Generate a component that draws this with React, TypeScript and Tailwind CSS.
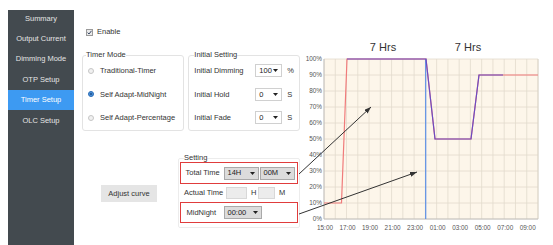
import React from "react";

function Tri() {
  return (
    <svg width="5" height="3" viewBox="0 0 5 3">
      <path d="M0 0H5L2.5 3Z" fill="#222" />
    </svg>
  );
}

function Select({ value, w, gray }: { value: string; w: string; gray?: boolean }) {
  return (
    <div
      className={`flex items-center justify-between h-[13px] ${w} pl-[3px] pr-[3px] border ${
        gray ? "border-[#a9a9a9] bg-[#dcdcdc]" : "border-[#d0d0d0] bg-white"
      } text-[7.5px] text-[#222]`}
    >
      <span>{value}</span>
      <Tri />
    </div>
  );
}

function Radio({ checked }: { checked?: boolean }) {
  if (checked)
    return (
      <div className="w-[6px] h-[6px] rounded-full bg-[#4a90d9] border border-[#2d6db5] flex items-center justify-center">
        <div className="w-[2px] h-[2px] rounded-full bg-[#1d4f8a]" />
      </div>
    );
  return <div className="w-[6px] h-[6px] rounded-full bg-[#f1f1f1] border border-[#c6c6c6]" />;
}

const menu = ["Summary", "Output Current", "Dimming Mode", "OTP Setup", "Timer Setup", "OLC Setup"];

function Chart() {
  const X0 = 24;
  const X1 = 238;
  const Y0 = 59;
  const Y1 = 219;
  const hx = (h: number) => X0 + (h * (X1 - X0)) / 19;
  const py = (p: number) => Y1 - p * 1.6;
  const hours = Array.from({ length: 20 }, (_, i) => i);
  const pcts = Array.from({ length: 11 }, (_, i) => i * 10);
  const labels = ["15:00", "17:00", "19:00", "21:00", "23:00", "01:00", "03:00", "05:00", "07:00", "09:00"];
  return (
    <svg width="253" height="245" viewBox="0 0 253 245" className="shrink-0">
      <text x="83" y="51" textAnchor="middle" fontSize="11" fill="#333" fontFamily="'Liberation Sans', Arial, sans-serif">
        7 Hrs
      </text>
      <text x="168" y="51" textAnchor="middle" fontSize="11" fill="#333" fontFamily="'Liberation Sans', Arial, sans-serif">
        7 Hrs
      </text>
      <rect x={X0} y={Y0} width={X1 - X0} height={Y1 - Y0} fill="#fdf6ea" />
      {hours.map((h) => (
        <line key={"v" + h} x1={hx(h)} x2={hx(h)} y1={Y0} y2={Y1} stroke="#e2dbcd" strokeWidth="0.8" />
      ))}
      {pcts.map((p) => (
        <line key={"h" + p} x1={X0} x2={X1} y1={py(p)} y2={py(p)} stroke="#e2dbcd" strokeWidth="0.8" />
      ))}
      <line x1={X1} x2={X1} y1={Y0} y2={Y1} stroke="#d6d0c4" strokeWidth="0.8" />
      <line x1={X0} x2={X0} y1={Y0} y2={Y1} stroke="#b8b8b8" strokeWidth="0.8" />
      <line x1={X0} x2={X1} y1={Y1} y2={Y1} stroke="#b8b8b8" strokeWidth="0.8" />
      {pcts.map((p) => (
        <text
          key={"yl" + p}
          x="22"
          y={py(p) + 2.2}
          textAnchor="end"
          fontSize="6.4"
          fill="#555"
          fontFamily="'Liberation Sans', Arial, sans-serif"
        >
          {p}%
        </text>
      ))}
      {labels.map((l, i) => (
        <text
          key={l}
          x={hx(i * 2) + 1}
          y="229.5"
          textAnchor="middle"
          fontSize="6.4"
          fill="#555"
          fontFamily="'Liberation Sans', Arial, sans-serif"
        >
          {l}
        </text>
      ))}
      <polyline
        points="24,203 41.5,203 47,59 126,59 135,139 171,139 179,75 238,75"
        fill="none"
        stroke="#f07b7b"
        strokeWidth="1.2"
      />
      <line x1="125.7" x2="125.7" y1={Y0} y2={Y1} stroke="#5b8ee6" strokeWidth="1.2" />
      <polyline
        points="47,59 126,59 135,139 171,139 179,75 203,75"
        fill="none"
        stroke="#6a4cc4"
        strokeWidth="1.2"
      />
    </svg>
  );
}

export default function App() {
  return (
    <div className="relative w-[553px] h-[245px] bg-white flex overflow-hidden font-['Liberation_Sans',Arial,sans-serif] text-[7.5px] leading-none text-[#333]">
      <aside className="ml-[8px] mt-[10px] w-[66px] shrink-0 bg-[#434a4f] text-[#e4e4e4]">
        <div className="-mt-[1.8px] flex flex-col">
          {menu.map((m) => (
            <div
              key={m}
              className={`h-[20.4px] flex items-center justify-center ${
                m === "Timer Setup" ? "bg-[#3d9af2] text-white" : ""
              }`}
            >
              {m}
            </div>
          ))}
        </div>
      </aside>

      <main className="w-[226px] shrink-0 pl-[8px] flex flex-col">
        <div className="mt-[26px] h-[12px] flex items-center">
          <div className="ml-[4px] w-[7px] h-[7px] border border-[#9a9a9a] bg-[#e9e9e9] flex items-center justify-center">
            <svg width="5" height="5" viewBox="0 0 5 5">
              <path d="M0.6 2.6L2 4L4.5 0.8" fill="none" stroke="#3a4a66" strokeWidth="1" />
            </svg>
          </div>
          <span className="ml-[4px]">Enable</span>
        </div>

        <div className="mt-[13px] flex gap-[4px]">
          <fieldset className="w-[105px] h-[80px] border border-[#e3e3e3] rounded-[3px] px-[3px]">
            <legend className="leading-[8px]">Timer Mode</legend>
            <div className="flex flex-col">
              {[
                ["Traditional-Timer", false],
                ["Self Adapt-MidNight", true],
                ["Self Adapt-Percentage", false],
              ].map(([t, c]) => (
                <div key={t as string} className="h-[23.5px] flex items-center">
                  <div className="ml-[2px]">
                    <Radio checked={c as boolean} />
                  </div>
                  <span className="ml-[6px]">{t as string}</span>
                </div>
              ))}
            </div>
          </fieldset>
          <fieldset className="w-[108px] h-[80px] border border-[#e3e3e3] rounded-[3px] px-[5px]">
            <legend className="leading-[8px]">Initial Setting</legend>
            <div className="flex flex-col">
              {[
                ["Initial Dimming", "100", "%"],
                ["Initial Hold", "0", "S"],
                ["Initial Fade", "0", "S"],
              ].map(([l, v, u]) => (
                <div key={l} className="h-[23.5px] flex items-center">
                  <span className="w-[61px]">{l}</span>
                  <Select value={v} w="w-[27px]" />
                  <span className="ml-[5px]">{u}</span>
                </div>
              ))}
            </div>
          </fieldset>
        </div>

        <div className="flex items-start">
          <div className="mt-[54px] ml-[19px] w-[56px] h-[17px] bg-[#e5e5e5] flex items-center justify-center">
            Adjust curve
          </div>
          <fieldset className="ml-[21px] mt-[23px] w-[122px] h-[74px] border border-[#ececec] rounded-[2px] px-[1px]">
            <legend className="leading-[8px] ml-[4px]">Setting</legend>
            <div className="h-[22px] border-[1.5px] border-[#e03c3c] flex items-center pl-[4.5px]">
              <span className="w-[38px]">Total Time</span>
              <Select value="14H" w="w-[35px]" gray />
              <div className="ml-[1px]">
                <Select value="00M" w="w-[35px]" gray />
              </div>
            </div>
            <div className="h-[18px] flex items-center pl-[4px]">
              <span className="w-[42px]">Actual Time</span>
              <div className="w-[21px] h-[12px] bg-[#ececec] border border-[#d8d8d8]" />
              <span className="ml-[4px] w-[7px]">H</span>
              <div className="w-[17px] h-[12px] bg-[#ececec] border border-[#d8d8d8]" />
              <span className="ml-[4px]">M</span>
            </div>
            <div className="h-[21px] border-[1.5px] border-[#e03c3c] flex items-center pl-[5.5px]">
              <span className="w-[37px]">MidNight</span>
              <Select value="00:00" w="w-[38px]" gray />
            </div>
          </fieldset>
        </div>
      </main>

      <Chart />

      <svg className="absolute inset-0 pointer-events-none" width="553" height="245" viewBox="0 0 553 245">
        <defs>
          <marker id="ah" markerWidth="7" markerHeight="5" refX="7" refY="2.5" orient="auto" markerUnits="userSpaceOnUse">
            <path d="M0 0L7 2.5L0 5Z" fill="#333" />
          </marker>
        </defs>
        <line x1="299" y1="174" x2="371" y2="107" stroke="#333" strokeWidth="1" markerEnd="url(#ah)" />
        <line x1="299" y1="214" x2="417" y2="172" stroke="#333" strokeWidth="1" markerEnd="url(#ah)" />
      </svg>
    </div>
  );
}
